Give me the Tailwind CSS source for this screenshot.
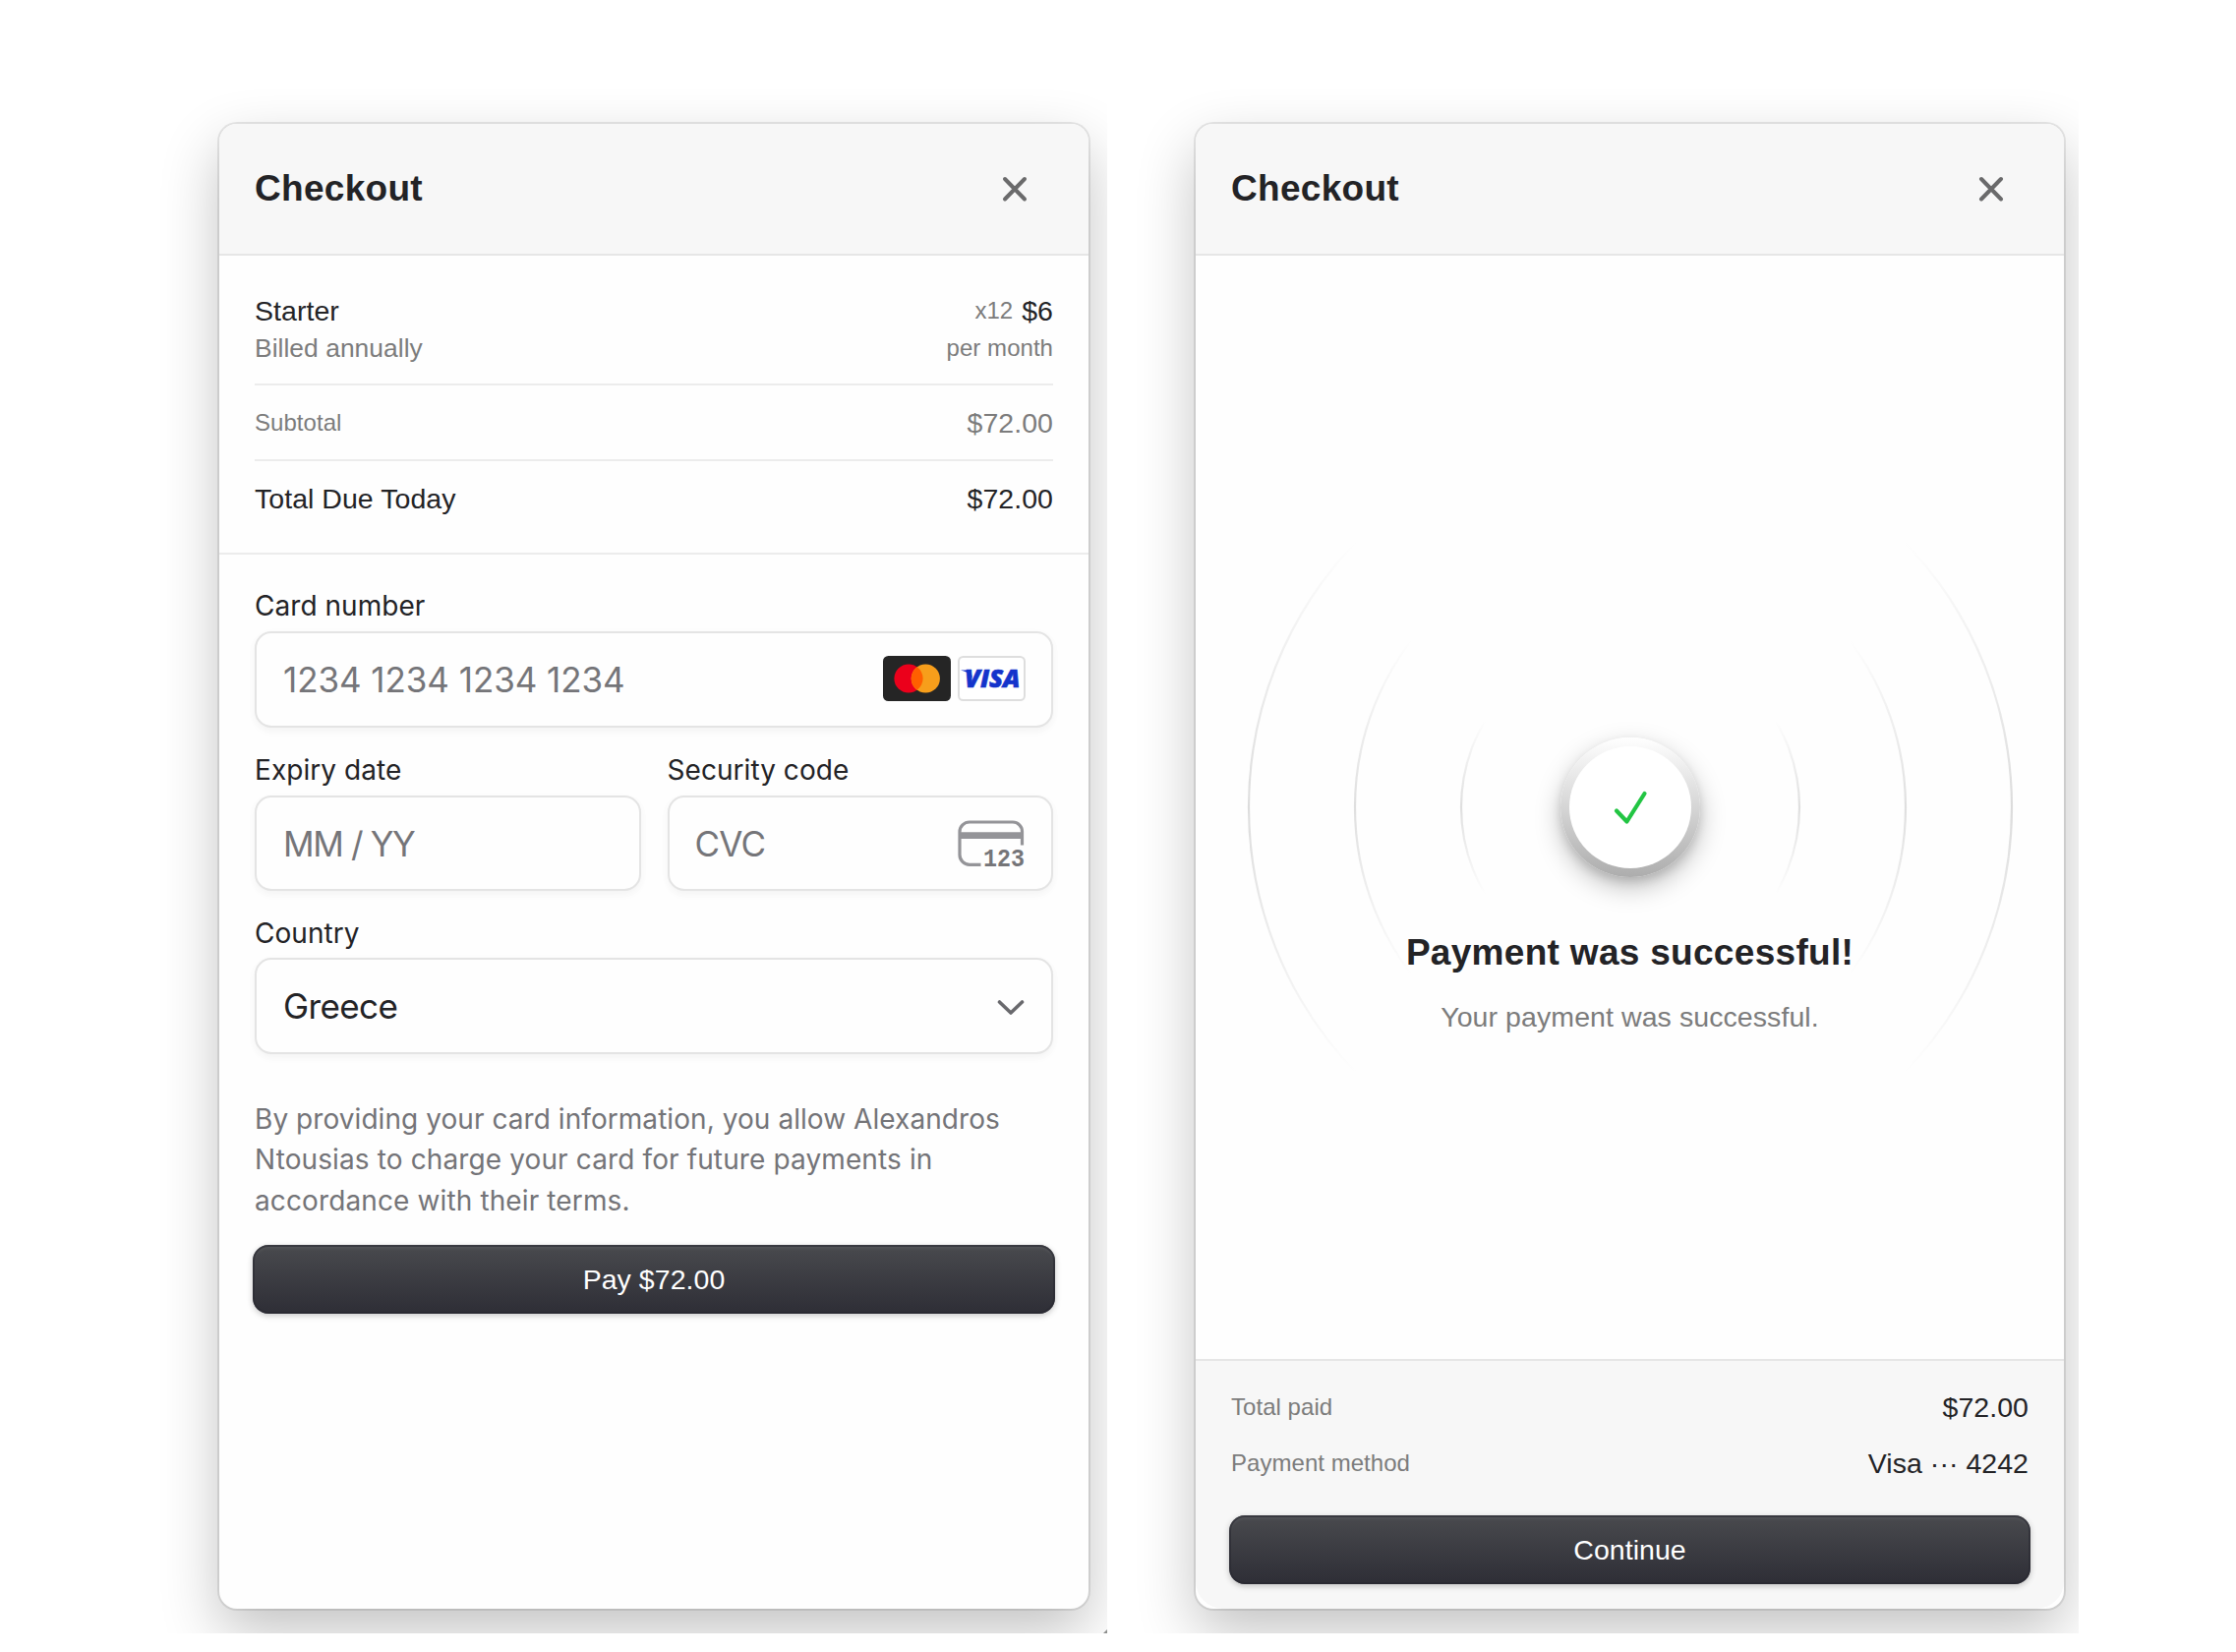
<!DOCTYPE html>
<html lang="en">
<head>
<meta charset="utf-8">
<title>Checkout</title>
<script src="https://cdn.jsdelivr.net/npm/@tailwindcss/browser@4"></script>
</head>
<body class="flex h-[1680px] w-[2274px] overflow-hidden bg-white font-['Liberation_Sans',Arial,sans-serif] text-[28.5px] leading-9 tracking-[0.04px] text-[#232326]">

<!-- Payment form -->
<section class="relative h-[1661px] w-[1126px] overflow-hidden pt-[126px] pl-[223px]">
  <div class="flex h-[1510px] w-[884px] flex-col overflow-hidden rounded-[18px] bg-[#fefefe] shadow-[0_0_0_2px_rgba(0,0,0,0.09),0_24px_60px_rgba(0,0,0,0.24)]">
    <header class="flex h-[134px] items-center justify-between border-b-2 border-[#e6e6e6] bg-[#f7f7f7] pr-[61px] pl-[36px]">
      <h1 class="text-[37px] leading-10 font-bold tracking-[0.3px]">Checkout</h1>
      <svg class="size-7" viewBox="0 0 28 28" fill="none" stroke="#6a6a6b" stroke-width="4" stroke-linecap="round"><path d="M4 4l20 20.5M24 4L4 24.5"/></svg>
    </header>

    <div class="border-b-2 border-[#ececec] pt-[37px] pr-[36px] pb-[17px] pl-[36px]">
      <div class="border-b-2 border-[#ececec] pb-[17px]">
        <div class="flex h-[38px] items-center justify-between">
          <span>Starter</span>
          <span class="flex items-center gap-[9px]"><span class="text-[24px] text-[#7c7c7c]">x12</span><span>$6</span></span>
        </div>
        <div class="flex h-[38px] items-center justify-between text-[#7c7c7c]">
          <span class="text-[26.4px]">Billed annually</span>
          <span class="text-[24px]">per month</span>
        </div>
      </div>
      <div class="flex h-[77px] items-center justify-between border-b-2 border-[#ececec] text-[#7c7c7c]">
        <span class="text-[24px]">Subtotal</span>
        <span>$72.00</span>
      </div>
      <div class="flex h-[76px] items-center justify-between">
        <span>Total Due Today</span>
        <span>$72.00</span>
      </div>
    </div>

    <form class="flex flex-col px-[36px] pt-[36px] font-['Inter',sans-serif] text-[28px] tracking-[0.05px]">
      <label class="h-8 leading-8">Card number</label>
      <div class="mt-[10px] flex h-[98px] items-center justify-between rounded-[17px] border-2 border-[#e4e4e4] bg-[#fefefe] pr-[26px] pl-[27px] shadow-[0_4px_8px_rgba(0,0,0,0.03),0_2px_12px_rgba(0,0,0,0.02)]">
        <span class="text-[35px] leading-[48px] tracking-[-0.06px] text-[#757579]">1234 1234 1234 1234</span>
        <div class="-mt-[2px] flex gap-[7px]">
          <svg class="h-[46px] w-[69px]" viewBox="0 0 69 46"><rect width="69" height="46" rx="5.5" fill="#252525"/><circle cx="26" cy="23" r="14.6" fill="#eb001b"/><circle cx="43.3" cy="23" r="14.6" fill="#f79e1b"/><path d="M34.65 11.24a14.6 14.6 0 0 1 0 23.52a14.6 14.6 0 0 1 0-23.52z" fill="#ff5f00"/></svg>
          <svg class="h-[46px] w-[69px]" viewBox="0 0 69 46"><rect x="1" y="1" width="67" height="44" rx="4.5" fill="#fff" stroke="#dedede" stroke-width="2"/><path d="M3.5 14.4h9.5l2.2 8.6c-1.8-3.8-6-7.2-11.7-8.3z" fill="#1434cb"/><text x="7" y="31.9" textLength="56.5" lengthAdjust="spacingAndGlyphs" font-family="Open Sans" font-weight="800" font-style="italic" font-size="24.5" letter-spacing="0" fill="#1434cb" stroke="#1434cb" stroke-width=".6">VISA</text></svg>
        </div>
      </div>

      <div class="mt-[27px] flex gap-[27px]">
        <div class="flex flex-1 flex-col">
          <label class="h-8 leading-8">Expiry date</label>
          <div class="mt-[10px] flex h-[97px] items-center rounded-[17px] border-2 border-[#e4e4e4] bg-[#fefefe] pl-[27px] shadow-[0_4px_8px_rgba(0,0,0,0.03),0_2px_12px_rgba(0,0,0,0.02)]">
            <span class="text-[35px] leading-[48px] tracking-[-1.38px] text-[#757579]">MM / YY</span>
          </div>
        </div>
        <div class="flex flex-1 flex-col">
          <label class="h-8 leading-8">Security code</label>
          <div class="mt-[10px] flex h-[97px] items-center justify-between rounded-[17px] border-2 border-[#e4e4e4] bg-[#fefefe] pr-[26px] pl-[26px] shadow-[0_4px_8px_rgba(0,0,0,0.03),0_2px_12px_rgba(0,0,0,0.02)]">
            <span class="text-[35px] leading-[48px] tracking-[-0.77px] text-[#757579]">CVC</span>
            <svg class="h-[48px] w-[69px] overflow-visible" viewBox="0 0 69 48"><path d="M23.500 45.300H12a10 10 0 0 1-10-10V12a10 10 0 0 1 10-10H56a9.500 9.500 0 0 1 9.500 9.500V25.500" fill="none" stroke="#949498" stroke-width="3.2"/><path d="M2 12.300h63.500v6.800H2z" fill="#949498"/><text x="26" y="46.600" textLength="42" lengthAdjust="spacingAndGlyphs" font-family="Liberation Mono" font-weight="bold" font-size="26" letter-spacing="0" fill="#757578">123</text></svg>
          </div>
        </div>
      </div>

      <label class="mt-[27px] h-8 leading-8">Country</label>
      <div class="mt-[9px] flex h-[98px] items-center justify-between rounded-[17px] border-2 border-[#e4e4e4] bg-[#fefefe] pr-[26px] pl-[27px] shadow-[0_4px_8px_rgba(0,0,0,0.03),0_2px_12px_rgba(0,0,0,0.02)]">
        <span class="text-[35px] leading-[48px] tracking-[-0.6px]">Greece</span>
        <svg class="h-[18px] w-[30px]" viewBox="0 0 30 18" fill="none" stroke="#69696d" stroke-width="3.6" stroke-linecap="round" stroke-linejoin="round"><path d="M3.500 5l11.500 11l11.500-11"/></svg>
      </div>

      <p class="mt-[46px] leading-[41.3px] tracking-[0.06px] whitespace-nowrap text-[#747478]">By providing your card information, you allow Alexandros<br><span class="tracking-[0.12px]">Ntousias to charge your card for future payments in</span><br><span class="tracking-[0.12px]">accordance with their terms.</span></p>

      <button type="button" class="-mx-[2px] mt-[24px] h-[70px] rounded-[16px] bg-linear-to-b from-[#494a4e] to-[#2e2e36] font-['Liberation_Sans',Arial,sans-serif] text-[28.5px] tracking-[0.05px] text-white shadow-[inset_0_0_0_2px_rgba(40,40,48,0.6),inset_0_4px_3px_rgba(255,255,255,0.06),0_2px_6px_rgba(0,0,0,0.22)]">Pay $72.00</button>
    </form>
  </div>
  <svg class="absolute right-0 bottom-0 size-1" viewBox="0 0 4 4"><path d="M4 0v4H0z" fill="#8d8f8d"/></svg>
</section>

<!-- Payment confirmation -->
<section class="relative h-[1661px] w-[988px] overflow-hidden pt-[126px] pl-[90px]">
  <div class="flex h-[1510px] w-[883px] flex-col rounded-[18px] bg-[#fefefe] shadow-[0_0_0_2px_rgba(0,0,0,0.09),0_24px_60px_rgba(0,0,0,0.24)]">
    <header class="flex h-[134px] shrink-0 items-center justify-between rounded-t-[18px] border-b-2 border-[#e6e6e6] bg-[#f7f7f7] pr-[60px] pl-[36px]">
      <h1 class="text-[37px] leading-10 font-bold tracking-[0.3px]">Checkout</h1>
      <svg class="size-7" viewBox="0 0 28 28" fill="none" stroke="#6a6a6b" stroke-width="4" stroke-linecap="round"><path d="M4 4l20 20.5M24 4L4 24.500"/></svg>
    </header>

    <main class="relative flex flex-1 flex-col items-center pt-[490px]">
      <svg class="absolute top-[161px] left-[42px] size-[800px]" viewBox="-400 -400 800 800" fill="none" stroke-width="2.200">
        <defs>
          <linearGradient id="r1" gradientUnits="userSpaceOnUse" x1="0" y1="-270" x2="0" y2="270"><stop offset="0" stop-color="#dcdcdc" stop-opacity="0"/><stop offset=".5" stop-color="#dcdcdc"/><stop offset="1" stop-color="#dcdcdc" stop-opacity="0"/></linearGradient>
          <linearGradient id="r2" gradientUnits="userSpaceOnUse" x1="0" y1="-170" x2="0" y2="170"><stop offset="0" stop-color="#dfdfdf" stop-opacity="0"/><stop offset=".5" stop-color="#dfdfdf"/><stop offset="1" stop-color="#dfdfdf" stop-opacity="0"/></linearGradient>
          <linearGradient id="r3" gradientUnits="userSpaceOnUse" x1="0" y1="-88" x2="0" y2="88"><stop offset="0" stop-color="#dfdfdf" stop-opacity="0"/><stop offset=".5" stop-color="#dfdfdf"/><stop offset="1" stop-color="#dfdfdf" stop-opacity="0"/></linearGradient>
        </defs>
        <circle r="388" stroke="url(#r1)"/><circle r="280" stroke="url(#r2)"/><circle r="172" stroke="url(#r3)"/>
      </svg>
      <div class="relative flex size-[142px] items-center justify-center rounded-full bg-linear-to-b from-white to-[#adadad] shadow-[0_10px_26px_rgba(0,0,0,0.25),0_5px_10px_rgba(0,0,0,0.12)]">
        <div class="flex size-[124px] items-center justify-center rounded-full bg-white">
          <svg class="size-10" viewBox="0 0 40 40" fill="none" stroke="#22c543" stroke-width="4.200" stroke-linecap="round" stroke-linejoin="round"><path d="M6 23.500L16.500 34.500L34.500 6"/></svg>
        </div>
      </div>
      <h2 class="relative mt-[55px] text-[37px] leading-[44px] font-bold tracking-[0.3px]">Payment was successful!</h2>
      <p class="relative mt-[25px] tracking-[0.08px] text-[#7c7c7c]">Your payment was successful.</p>
    </main>

    <footer class="flex h-[254px] shrink-0 flex-col rounded-b-[28px] border-t-2 border-[#e6e6e6] bg-[#f7f7f7] pt-[18px] pr-[36px] pl-[36px]">
      <div class="flex h-[57px] items-center justify-between"><span class="text-[24px] text-[#7c7c7c]">Total paid</span><span>$72.00</span></div>
      <div class="flex h-[57px] items-center justify-between"><span class="text-[24px] text-[#7c7c7c]">Payment method</span><span>Visa ··· 4242</span></div>
      <button type="button" class="-mx-[2px] mt-[25px] h-[70px] rounded-[16px] bg-linear-to-b from-[#494a4e] to-[#2e2e36] text-[28.5px] tracking-[0.05px] text-white shadow-[inset_0_0_0_2px_rgba(40,40,48,0.6),inset_0_4px_3px_rgba(255,255,255,0.06),0_2px_6px_rgba(0,0,0,0.22)]">Continue</button>
    </footer>
  </div>
</section>

</body>
</html>
